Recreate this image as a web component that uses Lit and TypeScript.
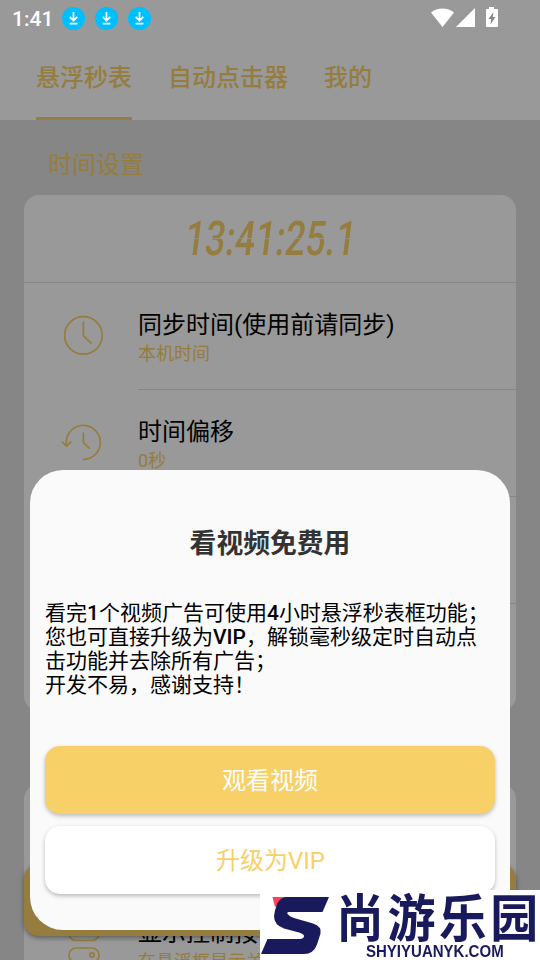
import { LitElement, html, css } from "lit";
import { customElement } from "lit/decorators.js";

const clockIcon = html`<svg class="icon" viewBox="0 0 48 48">
  <circle cx="24.4" cy="23.4" r="18.8"></circle>
  <path d="M24.4 10v13.8l7.7 7.3"></path>
</svg>`;

const offsetIcon = html`<svg class="icon" viewBox="0 0 48 48">
  <path d="M24.4 40.4A17 17 0 1 0 7.6 26.5"></path>
  <path d="M3.3 23.2l4.300 4 4.100-4"></path>
  <path d="M24.400 14v9.600l5.800 5.600"></path>
</svg>`;

const togglesIcon = html`<svg class="icon" viewBox="0 0 48 48">
  <rect x="10" y="6.500" width="30" height="14" rx="7"></rect>
  <circle cx="17" cy="13.500" r="2.200"></circle>
  <rect x="10" y="28" width="30" height="14.500" rx="7.200"></rect>
  <circle cx="33" cy="35" r="2.200"></circle>
</svg>`;

interface Row {
  icon: unknown;
  title: string;
  note: string;
}

const timeRows: Row[] = [
  { icon: clockIcon, title: "同步时间(使用前请同步)", note: "本机时间" },
  { icon: offsetIcon, title: "时间偏移", note: "0秒" },
  { icon: "", title: "", note: "" },
  { icon: "", title: "", note: "" },
];

const displayRows: Row[] = [
  { icon: "", title: "", note: "" },
  { icon: togglesIcon, title: "显示控制按", note: "在悬浮框显示关" },
];

@customElement("app-root")
export class AppRoot extends LitElement {
  static styles = css`
    * { box-sizing: border-box; }
    :host {
      display: block;
      position: relative;
      width: 540px;
      height: 960px;
      overflow: hidden;
      background: #dfdfdf;
      color: #000;
      font-family: Roboto, "Noto Sans CJK SC", sans-serif;
      --gold: #f7d068;
    }
    .status {
      position: absolute;
      z-index: 2;
      inset: 0 0 auto 0;
      height: 37px;
      display: flex;
      align-items: center;
      padding: 0 41px 0 12px;
      color: #fff;
      font-size: 21px;
      font-weight: 500;
    }
    .time { width: 50px; line-height: 37px; padding-top: 1px; }
    .downloads { display: flex; gap: 10px; flex: 1; }
    .downloads svg { width: 23px; height: 23px; display: block; }
    .signals { width: 70px; height: 24px; display: block; }
    .header {
      height: 120px;
      background: #fff;
      padding: 37px 36px 0;
      display: flex;
      gap: 36px;
    }
    .tab {
      height: 83px;
      color: var(--gold);
      font-size: 24px;
      font-weight: 500;
      line-height: 82px;
      border-bottom: 3px solid transparent;
    }
    .tab.active { border-color: var(--gold); }
    .section {
      height: 75px;
      padding: 7px 48px 0;
      font-size: 24px;
      line-height: 76px;
      color: var(--gold);
    }
    .card {
      margin: 0 24px 73px;
      background: #fff;
      border-radius: 15px;
      overflow: hidden;
    }
    .digits {
      height: 88px;
      border-bottom: 1px solid #dfdfdf;
      display: flex;
      justify-content: center;
      align-items: center;
      color: var(--gold);
      font-size: 48px;
      font-weight: 500;
      line-height: 87px;
    }
    .digits span {
      display: block;
      transform: translateX(1px) skewX(-7deg) scaleX(0.745);
      -webkit-mask-image: linear-gradient(#000 0 43px, rgba(0, 0, 0, 0.3) 43px 44px, #000 44px);
      mask-image: linear-gradient(#000 0 43px, rgba(0, 0, 0, 0.3) 43px 44px, #000 44px);
    }
    .row { height: 107px; display: flex; }
    .icon-cell { width: 114px; padding: 29px 0 0 35px; }
    .icon {
      display: block;
      width: 48px;
      height: 48px;
      fill: none;
      stroke: var(--gold);
      stroke-width: 1.7;
      stroke-linecap: round;
      stroke-linejoin: round;
    }
    .row-text {
      flex: 1;
      padding-top: 26px;
      border-bottom: 1px solid #dfdfdf;
      white-space: nowrap;
    }
    .row:last-child .row-text { border-bottom: 0; }
    .row-title { font-size: 24px; line-height: 32px; height: 32px; }
    .row-note { font-size: 18px; line-height: 26px; color: var(--gold); }
    .start {
      position: absolute;
      left: 24px;
      top: 864px;
      width: 492px;
      height: 72px;
      border-radius: 15px;
      background: var(--gold);
      box-shadow: 0 2px 5px rgba(0, 0, 0, 0.4);
    }
    .scrim { position: absolute; inset: 0; background: rgba(0, 0, 0, 0.4); }
    .dialog {
      position: absolute;
      left: 30px;
      top: 470px;
      width: 480px;
      height: 460px;
      border-radius: 33px;
      background: #fafafa;
      padding: 52px 15px 0;
      display: flex;
      flex-direction: column;
    }
    .dialog-title {
      height: 79px;
      text-align: center;
      font-size: 26.8px;
      font-weight: 700;
      line-height: 44px;
      color: #333;
    }
    .message {
      height: 145px;
      font-size: 21px;
      line-height: 24px;
      white-space: nowrap;
    }
    .message b { font-weight: 500; }
    .button {
      height: 68px;
      border-radius: 15px;
      margin-bottom: 12px;
      text-align: center;
      font-size: 24px;
      line-height: 71px;
      box-shadow: 0 2px 4px rgba(0, 0, 0, 0.26);
    }
    .primary { background: var(--gold); color: #fff; }
    .secondary { background: #fff; color: var(--gold); padding-left: 1px; }
    .brand {
      position: absolute;
      right: 0;
      bottom: 0;
      width: 280px;
      height: 70px;
      background: #fff;
      color: #191a5b;
      display: flex;
      overflow: hidden;
    }
    .mark { width: 76px; height: 70px; flex: none; display: block; }
    .brand-text { flex: 1; }
    .brand-name {
      height: 52px;
      font: 700 48px/52px "Noto Sans CJK SC", sans-serif;
      letter-spacing: 3.4px;
      white-space: nowrap;
      transform: translateY(-1px) scaleY(1.06);
    }
    .brand-site {
      padding-left: 30px;
      font: 700 16.5px/18px "Liberation Sans", sans-serif;
      transform: scaleX(0.91);
      transform-origin: 30px 0;
    }
  `;

  private row(r: Row) {
    return html`<div class="row">
      <div class="icon-cell">${r.icon}</div>
      <div class="row-text">
        <div class="row-title">${r.title}</div>
        <div class="row-note">${r.note}</div>
      </div>
    </div>`;
  }

  render() {
    return html`
      <div class="status">
        <div class="time">1:41</div>
        <div class="downloads">
          ${[0, 1, 2].map(
            () => html`<svg viewBox="0 0 23 23">
              <circle cx="11.5" cy="11.5" r="11.5" fill="#00bfff"></circle>
              <path d="M11.5 5v8.2M7.7 9.8l3.8 3.7 3.8-3.7M7.6 16.6h7.8" fill="none" stroke="#fff" stroke-width="1.7"></path>
            </svg>`
          )}
        </div>
        <svg class="signals" viewBox="0 0 70 24">
          <path d="M2 5.5C8 .3 19 .3 25 5.500L13.500 20z" fill="#fff"></path>
          <path d="M46 1v19H27z" fill="#fff"></path>
          <path d="M60 0h5v2h3.200q.8 0 .8.800v16.400q0 .8-.8.800H57.800q-.8 0-.8-.800V2.800q0-.8.800-.800H60z" fill="#fff"></path>
          <path d="M64.500 5l-5 7h2.700l-.700 5.500 5-7.500h-2.700z" fill="#888"></path>
        </svg>
      </div>
      <div class="header">
        <div class="tab active">悬浮秒表</div>
        <div class="tab">自动点击器</div>
        <div class="tab">我的</div>
      </div>
      <div class="section">时间设置</div>
      <div class="card">
        <div class="digits"><span>13:41:25.1</span></div>
        ${timeRows.map((r) => this.row(r))}
      </div>
      <div class="card">${displayRows.map((r) => this.row(r))}</div>
      <div class="start"></div>
      <div class="scrim"></div>
      <div class="dialog">
        <div class="dialog-title">看视频免费用</div>
        <div class="message">
          <div>看完<b>1</b>个视频广告可使用<b>4</b>小时悬浮秒表框功能；</div>
          <div>您也可直接升级为<b>VIP</b>，解锁毫秒级定时自动点</div>
          <div>击功能并去除所有广告；</div>
          <div>开发不易，感谢支持！</div>
        </div>
        <div class="button primary">观看视频</div>
        <div class="button secondary">升级为VIP</div>
      </div>
      <div class="brand">
        <svg class="mark" viewBox="0 0 76 70">
          <path d="M12.500 7H28L15 17z" fill="#ff4058"></path>
          <path d="M26 7H69L62.500 22H29q-3 .5-1 2.500 2 2 6 3.500l19 5.500q9 3 7.500 10l-3.500 11q-3.500 9.500-13 9.500H1L7.500 49H40q4-.5 4-3 0-2-5-3.500L24 38.500Q14 35 14 26q1-7 3-12 3-6.500 9-7z" fill="#191a5b"></path>
        </svg>
        <div class="brand-text">
          <div class="brand-name">尚游乐园</div>
          <div class="brand-site">SHYIYUANYK.COM</div>
        </div>
      </div>
    `;
  }
}
